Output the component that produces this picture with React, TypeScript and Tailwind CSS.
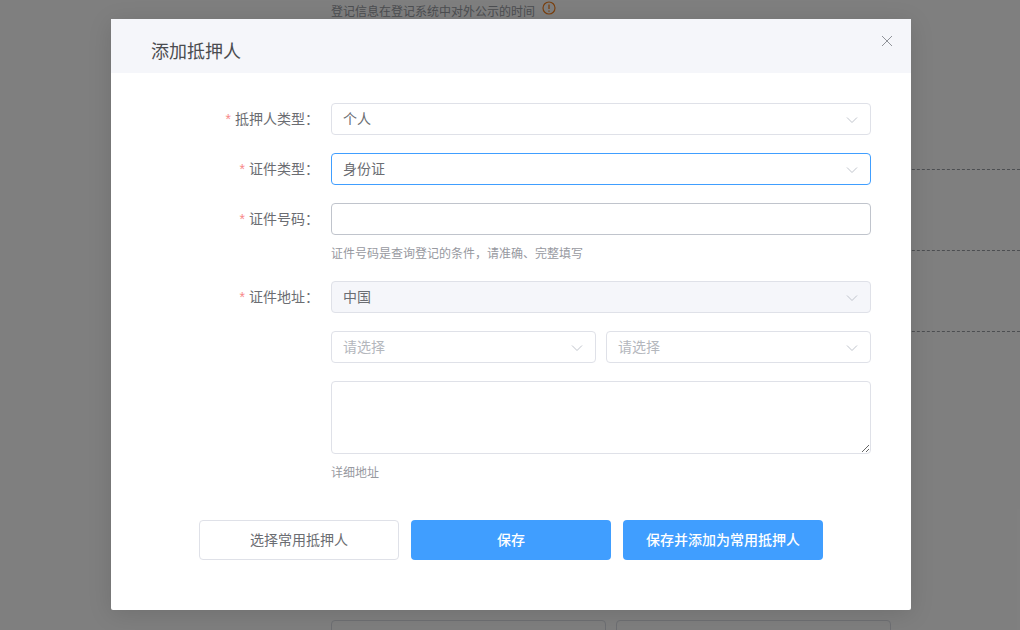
const font = "font-['Liberation_Sans','Noto_Sans_CJK_SC',sans-serif]";

function Chevron() {
  return (
    <svg width="12" height="8" viewBox="0 0 12 8" fill="none" className="mt-[1px] shrink-0">
      <path d="M1 1.5 L6 6.5 L11 1.5" stroke="#c0c4cc" strokeWidth="1" />
    </svg>
  );
}

function Select({ text, placeholder, disabled, focused }: { text: string; placeholder?: boolean; disabled?: boolean; focused?: boolean }) {
  return (
    <div
      className={`flex h-8 min-w-0 flex-1 items-center justify-between rounded-[4px] border pl-[11px] pr-[12px] text-sm ${
        focused ? "border-[#409eff]" : "border-[#dfe1e8]"
      } ${disabled ? "bg-[#f5f6fa]" : "bg-white"} ${placeholder ? "text-[#b4b7bd]" : "text-[#6b6d72]"}`}
    >
      <span>{text}</span>
      <Chevron />
    </div>
  );
}

function Row({ label, required, children, className }: { label?: string; required?: boolean; children: React.ReactNode; className?: string }) {
  return (
    <div className={`flex ${className ?? ""}`}>
      <div className="flex h-8 w-[220px] items-center justify-end pr-[12px] text-sm text-[#6b6d72]">
        {required && <span className="mr-1 text-[#f78989]">*</span>}
        {label && <span>{label}：</span>}
      </div>
      <div className="w-[540px]">{children}</div>
    </div>
  );
}

export default function App() {
  return (
    <div className={`relative h-[630px] w-[1020px] overflow-hidden bg-white ${font}`}>
      {/* page behind the dialog */}
      <div className="pl-[331px] text-[#999ca3]">
        <div className="flex h-[21px] items-end gap-[7px] text-xs leading-[17px]">
          <span>登记信息在登记系统中对外公示的时间</span>
          <svg width="14" height="14" viewBox="0 0 14 14" fill="none" className="mb-[6px]">
            <circle cx="7" cy="7" r="6" stroke="#f58220" strokeWidth="1.2" />
            <path d="M7 3.4 V8 M7 9.4 V10.8" stroke="#f58220" strokeWidth="1.3" />
          </svg>
        </div>
        <div className="mt-[148px] border-t border-dashed border-[#999ca3]" />
        <div className="mt-[80px] border-t border-dashed border-[#999ca3]" />
        <div className="mt-[80px] border-t border-dashed border-[#999ca3]" />
        <div className="mt-[288px] flex gap-[10px]">
          <div className="h-8 w-[275px] rounded-[4px] border border-[#dcdfe6]" />
          <div className="h-8 w-[275px] rounded-[4px] border border-[#dcdfe6]" />
        </div>
      </div>

      {/* overlay */}
      <div className="absolute inset-0 bg-black/50">
        <div className="ml-[111px] mt-[19px] h-[591px] w-[800px] rounded-[2px] bg-white shadow-[0_4px_24px_rgba(0,0,0,0.12)]">
          <div className="relative h-[54px] bg-[#f5f6fa] pl-[40px] pt-[19px] text-[18px] leading-[28px] text-[#4a4c50]">
            添加抵押人
            <svg width="12" height="12" viewBox="0 0 12 12" fill="none" className="absolute right-[18px] top-[16px]">
              <path d="M1 1 L11 11 M11 1 L1 11" stroke="#909399" strokeWidth="1" />
            </svg>
          </div>

          <div className="pt-[30px]">
            <Row label="抵押人类型" required className="mb-[18px]">
              <Select text="个人" />
            </Row>
            <Row label="证件类型" required className="mb-[18px]">
              <Select text="身份证" focused />
            </Row>
            <Row label="证件号码" required className="mb-[18px]">
              <input className="block h-8 w-full rounded-[4px] border border-[#c0c4cc] bg-white px-[11px] text-sm outline-none" />
              <div className="mt-[11px] text-xs leading-[17px] text-[#97999f]">证件号码是查询登记的条件，请准确、完整填写</div>
            </Row>
            <Row label="证件地址" required className="mb-[18px]">
              <Select text="中国" disabled />
            </Row>
            <Row className="mb-[18px]">
              <div className="flex gap-[10px]">
                <Select text="请选择" placeholder />
                <Select text="请选择" placeholder />
              </div>
            </Row>
            <Row>
              <textarea className="block h-[73px] w-full rounded-[4px] border border-[#dfe1e8] bg-white px-[11px] py-[5px] text-sm outline-none" />
              <div className="mt-[11px] text-xs leading-[17px] text-[#97999f]">详细地址</div>
            </Row>
          </div>

          <div className="mt-[38px] flex justify-center gap-3 text-sm">
            <button className="h-10 w-[200px] rounded-[4px] border border-[#dfe1e8] bg-white text-[#6b6d72]">选择常用抵押人</button>
            <button className="h-10 w-[200px] rounded-[4px] bg-[#409eff] font-medium text-white">保存</button>
            <button className="h-10 w-[200px] rounded-[4px] bg-[#409eff] font-medium text-white">保存并添加为常用抵押人</button>
          </div>
        </div>
      </div>
    </div>
  );
}
